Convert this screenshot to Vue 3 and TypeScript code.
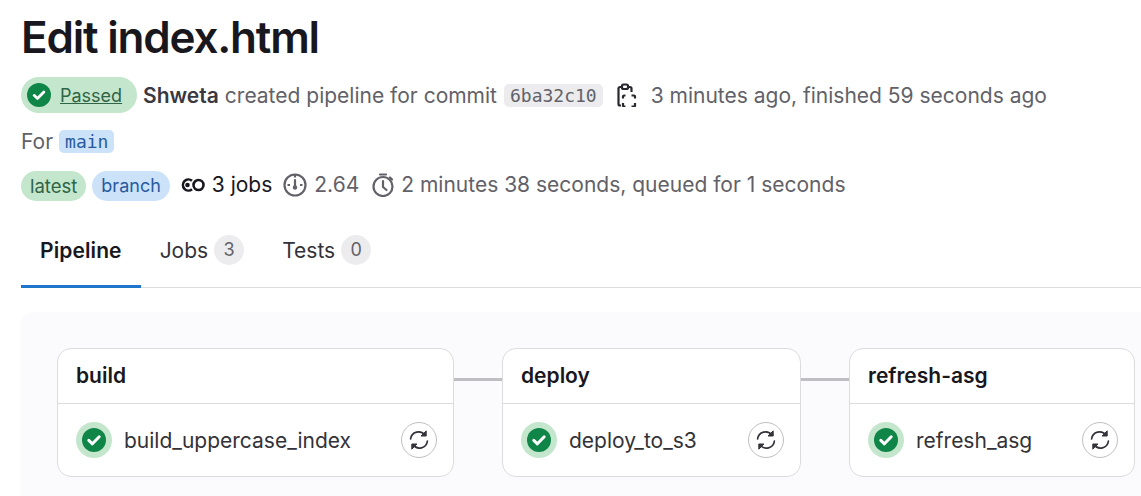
<script setup lang="ts">
interface Stage {
  name: string
  job: string
  width: number
}

const stages: Stage[] = [
  { name: 'build', job: 'build_uppercase_index', width: 397 },
  { name: 'deploy', job: 'deploy_to_s3', width: 299 },
  { name: 'refresh-asg', job: 'refresh_asg', width: 286 }
]
</script>

<template>
  <div class="page">
    <h1 class="title">Edit index.html</h1>

    <div class="row row-created">
      <a class="status">
        <svg class="status-icon" viewBox="0 0 28 28">
          <circle cx="14" cy="14" r="14" fill="#108548" />
          <path d="M8.300 14.400l3.900 3.700 7.500-7.600" fill="none" stroke="#fff" stroke-width="3.200" stroke-linecap="round" stroke-linejoin="round" />
        </svg>
        <span class="status-text">Passed</span>
      </a>
      <strong class="author">Shweta</strong>
      <span>created pipeline for commit</span>
      <code class="sha">6ba32c10</code>
      <svg class="copy" viewBox="0 0 20 24" fill="none" stroke="#28272d" stroke-width="2.200">
        <path d="M4.500 4H3a1.500 1.500 0 0 0-1.500 1.500V21A1.500 1.500 0 0 0 3 22.500h1" />
        <path d="M11.500 4H13a1.500 1.500 0 0 1 1.500 1.500V9" />
        <rect x="5" y="1.500" width="6" height="4.500" rx="1.500" />
        <path d="M6 15.500V13.500a1 1 0 0 1 1-1h1.500M14.500 12.500h2.500a1 1 0 0 1 1 1v2M18 20v2.500a1 1 0 0 1-1 1h-2.500M8.500 23.500H7a1 1 0 0 1-1-1V20" stroke-width="2.200" />
      </svg>
      <span class="ago">3 minutes ago, finished 59 seconds ago</span>
    </div>

    <div class="row row-for">
      <span>For</span>
      <code class="ref">main</code>
    </div>

    <div class="row row-meta">
      <span class="badge badge-green">latest</span>
      <span class="badge badge-blue">branch</span>
      <span class="meta meta-jobs">
        <svg class="jobs-icon" viewBox="0 0 24 14" fill="none" stroke="#18171d" stroke-width="2.600">
          <path d="M11 2.800A5.500 5.500 0 1 0 11 11.200" />
          <circle cx="17.500" cy="7" r="5" />
          <circle cx="6.500" cy="7" r="2.300" fill="#18171d" stroke="none" />
        </svg>
        3 jobs
      </span>
      <span class="meta meta-duration">
        <svg class="meta-icon" viewBox="0 0 24 24" fill="none" stroke="#626168" stroke-width="2.200">
          <circle cx="12" cy="12" r="10.500" />
          <path d="M12 7v6" stroke-linecap="round" />
          <circle cx="12" cy="14.500" r="2.200" fill="#626168" stroke="none" />
          <path d="M12 2v2.500M4.500 12H7M17 12h2.500" />
        </svg>
        2.64
      </span>
      <span class="meta meta-time">
        <svg class="meta-icon" viewBox="0 0 24 24" fill="none" stroke="#626168" stroke-width="2.200">
          <circle cx="12" cy="13.500" r="9.500" />
          <path d="M12 8v6l3.500 3" stroke-linecap="round" stroke-linejoin="round" />
          <path d="M9 1.500h6M19 4.500l2 2" stroke-linecap="round" />
        </svg>
        2 minutes 38 seconds, queued for 1 seconds
      </span>
    </div>

    <nav class="tabs">
      <a class="tab tab-active">Pipeline</a>
      <a class="tab">Jobs <span class="count">3</span></a>
      <a class="tab">Tests <span class="count">0</span></a>
    </nav>

    <section class="graph">
      <template v-for="(stage, i) in stages" :key="stage.name">
        <div v-if="i > 0" class="connector"></div>
        <div class="card" :style="{ width: stage.width + 'px' }">
          <div class="card-head">{{ stage.name }}</div>
          <div class="job">
            <span class="job-status">
              <svg viewBox="0 0 24 24" width="24" height="24">
                <circle cx="12" cy="12" r="12" fill="#108548" />
                <path d="M6.800 12.400l3.600 3.400 6.800-7" fill="none" stroke="#fff" stroke-width="3" stroke-linecap="round" stroke-linejoin="round" />
              </svg>
            </span>
            <span class="job-name">{{ stage.job }}</span>
            <span class="retry">
              <svg viewBox="0 0 20 20" width="20" height="20" fill="none" stroke="#333238" stroke-width="1.700" stroke-linecap="round">
                <path d="M1.600 9A8 8 0 0 1 16 5.200" />
                <path d="M18.400 11A8 8 0 0 1 4 14.800" />
                <path d="M17.200 1.200v4.800h-4.800z" fill="#333238" stroke-linejoin="round" stroke-width="1" />
                <path d="M2.800 18.800V14h4.800z" fill="#333238" stroke-linejoin="round" stroke-width="1" />
              </svg>
            </span>
          </div>
        </div>
      </template>
    </section>
  </div>
</template>

<style>
html,
body {
  margin: 0;
  background: #fff;
  overflow: hidden;
}
</style>

<style scoped>
.page {
  height: 496px;
  overflow: hidden;
  padding-left: 21px;
  font-family: Inter, "Noto Sans", sans-serif;
  font-size: 21px;
  color: #626168;
}

.title {
  margin: 0;
  height: 77px;
  font-size: 44px;
  line-height: 75px;
  font-weight: 600;
  letter-spacing: -1.2px;
  color: #18171d;
}

.row {
  display: flex;
  align-items: center;
}

.row-created {
  height: 36px;
}

.status {
  display: flex;
  align-items: center;
  box-sizing: border-box;
  width: 116px;
  height: 36px;
  padding-left: 6px;
  border-radius: 18px;
  background: #c3e6cd;
  color: #2f6446;
  font-size: 18px;
}

.status-icon {
  width: 24px;
  height: 24px;
  margin-right: 9px;
}

.status-text {
  text-decoration: underline;
}

.author {
  margin-left: 6px;
  margin-right: 6px;
  font-weight: 600;
  color: #3a383f;
}

.sha {
  margin-left: 7px;
  padding: 0 6px;
  height: 23px;
  line-height: 23px;
  border-radius: 5px;
  background: #ececef;
  font-family: "DejaVu Sans Mono", "Liberation Mono", monospace;
  font-size: 18px;
  color: #626168;
}

.copy {
  width: 20px;
  height: 24px;
  margin-left: 14px;
}

.ago {
  margin-left: 14px;
}

.row-for {
  margin-top: 14px;
  height: 28px;
  gap: 6px;
}

.ref {
  padding: 0 6px;
  height: 23px;
  line-height: 24px;
  border-radius: 5px;
  background: #cbe2f9;
  font-family: "DejaVu Sans Mono", "Liberation Mono", monospace;
  font-size: 18px;
  color: #2a5a9e;
}

.row-meta {
  margin-top: 16px;
  height: 30px;
}

.badge {
  height: 30px;
  line-height: 30px;
  padding: 0 9px;
  border-radius: 15px;
  font-size: 18.500px;
  margin-right: 6px;
}

.badge-green {
  background: #c3e6cd;
  color: #2f6446;
}

.badge-blue {
  background: #cbe2f9;
  color: #2a5a9e;
  font-size: 18px;
}

.meta {
  display: flex;
  align-items: center;
  gap: 7px;
  margin-bottom: 3px;
  white-space: nowrap;
}

.meta-jobs {
  margin-left: 5px;
  gap: 7px;
  color: #18171d;
}

.meta-duration {
  margin-left: 11px;
}

.meta-time {
  margin-left: 12px;
  gap: 6px;
}

.jobs-icon {
  width: 24px;
  height: 14px;
}

.meta-icon {
  width: 24px;
  height: 24px;
}

.tabs {
  display: flex;
  margin-top: 20px;
  height: 67px;
  border-bottom: 1px solid #dcdcde;
  box-sizing: border-box;
}

.tab {
  display: flex;
  align-items: center;
  gap: 6px;
  box-sizing: border-box;
  height: 67px;
  padding: 0 19px 9px;
  color: #333238;
}

.tab-active {
  font-weight: 600;
  letter-spacing: 0.1px;
  color: #18171d;
  border-bottom: 3px solid #1f75cb;
  padding-bottom: 6px;
}

.count {
  display: inline-block;
  width: 30px;
  height: 30px;
  line-height: 30px;
  text-align: center;
  border-radius: 50%;
  background: #ececef;
  color: #626168;
  font-size: 18px;
}

.graph {
  display: flex;
  align-items: flex-start;
  margin-top: 24px;
  padding: 36px;
  width: 1300px;
  height: 200px;
  box-sizing: border-box;
  background: #fbfafd;
  border-radius: 12px;
}

.connector {
  flex: none;
  width: 48px;
  height: 3px;
  margin-top: 30px;
  background: #bfbfc3;
}

.card {
  flex: none;
  box-sizing: border-box;
  height: 129px;
  background: #fff;
  border: 1px solid #dcdcde;
  border-radius: 14px;
}

.card-head {
  height: 54px;
  line-height: 54px;
  padding-left: 18px;
  border-bottom: 1px solid #dcdcde;
  font-weight: 600;
  color: #18171d;
}

.job {
  display: flex;
  align-items: center;
  height: 72px;
  padding: 0 16px 0 18px;
}

.job-status {
  display: flex;
  align-items: center;
  justify-content: center;
  width: 36px;
  height: 36px;
  border-radius: 50%;
  background: #c3e6cd;
}

.job-name {
  margin-left: 12px;
  flex: 1;
  color: #333238;
}

.retry {
  display: flex;
  align-items: center;
  justify-content: center;
  box-sizing: border-box;
  width: 36px;
  height: 36px;
  border: 1px solid #bfbfc3;
  border-radius: 50%;
}
</style>
